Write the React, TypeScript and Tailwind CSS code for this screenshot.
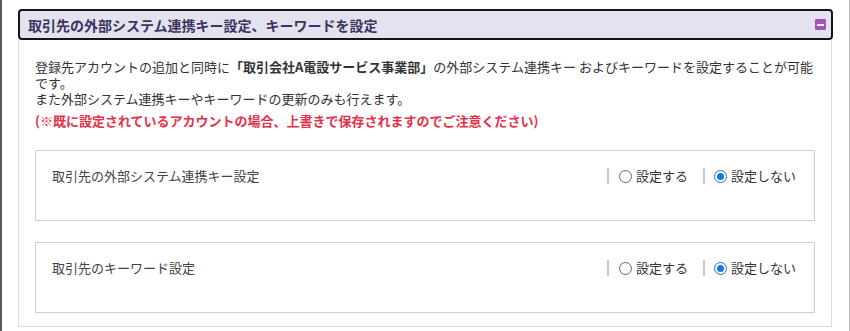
function Radio({ checked, label }: { checked: boolean; label: string }) {
    return (
        <label className="flex items-center">
            {checked ? (
                <span className="flex h-[13px] w-[13px] items-center justify-center rounded-full border-[1.5px] border-[#1a73e0] bg-white">
                    <span className="h-[7px] w-[7px] rounded-full bg-[#1a73e0]" />
                </span>
            ) : (
                <span className="h-[13px] w-[13px] rounded-full border border-[#666] bg-white" />
            )}
            <span className="ml-[4px] text-[13px] leading-4 text-[#333]">{label}</span>
        </label>
    );
}

function SettingRow({ title }: { title: string }) {
    return (
        <div className="flex h-[71px] items-start justify-between border border-[#cfcfcf] pt-[15px] pl-4 pr-[18px]">
            <span className="text-[13px] leading-5 text-[#444]">{title}</span>
            <div className="mt-[2px] flex items-center">
                <span className="h-4 w-[2px] bg-[#c8c8c8]" />
                <div className="ml-[10px]">
                    <Radio checked={false} label="設定する" />
                </div>
                <span className="ml-[15px] h-4 w-[2px] bg-[#c8c8c8]" />
                <div className="ml-[9px]">
                    <Radio checked label="設定しない" />
                </div>
            </div>
        </div>
    );
}

export default function App() {
    return (
        <div
            className="flex h-[331px] w-[850px] overflow-hidden bg-white"
            style={{ fontFamily: '"Noto Sans CJK JP", "Noto Sans", sans-serif' }}
        >
            <div className="w-[2px] shrink-0 bg-[#5a5a5a]" />
            <div className="ml-4 mt-[9px] w-[815px] shrink-0">
                <div className="flex h-[31px] items-center justify-between rounded-[4px] border-2 border-[#151515] bg-[#e4e2ef] pl-2 pr-[5px]">
                    <h2 className="text-[14px] font-bold leading-5 text-[#3a345e]">
                        取引先の外部システム連携キー設定、キーワードを設定
                    </h2>
                    <span className="flex h-[11px] w-[11px] items-center justify-center rounded-[1px] bg-[#a852b4]">
                        <span className="h-[2px] w-[7px] bg-white" />
                    </span>
                </div>
                <div className="mr-[1px] border-x border-b border-[#dcdcdc] px-4 pt-[19px] pb-[13px]">
                    <p className="text-[13px] leading-4 text-[#333]">
                        登録先アカウントの追加と同時に
                        <span className="font-bold">「取引会社A電設サービス事業部」</span>
                        の外部システム連携キー およびキーワードを設定することが可能です。
                        <br />
                        また外部システム連携キーやキーワードの更新のみも行えます。
                    </p>
                    <p className="mt-[6px] text-[13px] font-bold leading-4 text-[#e5304a]">
                        (※既に設定されているアカウントの場合、上書きで保存されますのでご注意ください)
                    </p>
                    <div className="mt-[21px] flex flex-col gap-[21px]">
                        <SettingRow title="取引先の外部システム連携キー設定" />
                        <SettingRow title="取引先のキーワード設定" />
                    </div>
                </div>
            </div>
            <div className="ml-auto w-[1px] shrink-0 bg-[#bdbdbd]" />
        </div>
    );
}
